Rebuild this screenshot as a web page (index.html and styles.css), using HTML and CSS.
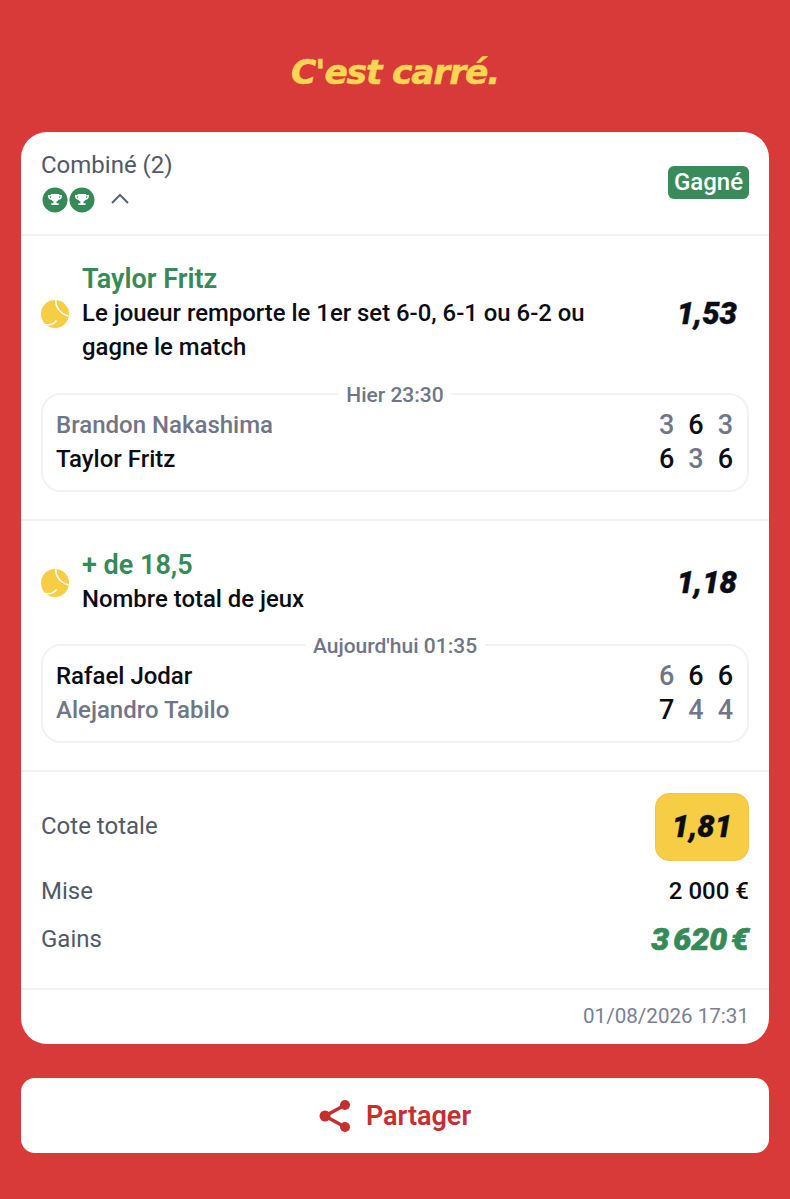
FILE: index.html
```html
<!DOCTYPE html>
<html lang="fr">
<head>
<meta charset="utf-8">
<title>C'est carré</title>
<link rel="stylesheet" href="styles.css">
</head>
<body>
  <div class="logo">C'est carré.</div>

  <div class="ticket">
    <div class="ticket-head">
      <div>
        <div class="bet-type">Combiné (2)</div>
        <div class="trophies">
          <svg class="trophy" viewBox="0 0 26 26"><circle cx="13" cy="13" r="12.500" fill="#358a58"/><path transform="translate(1 1) scale(.92)" d="M8.500 6.500h9v1.200h3v1.600c0 2-1.400 3.400-3.500 3.600-.5 1-1.300 1.600-2.300 1.800v1.800h2.300v1.900H9v-1.900h2.300v-1.800c-1-.2-1.800-.8-2.300-1.800-2.100-.2-3.500-1.600-3.500-3.600V7.700h3zm0 2.600H7.200c0 .9.500 1.500 1.500 1.800zm9 0v1.800c1-.3 1.500-.9 1.500-1.800z" fill="#fff"/></svg>
          <svg class="trophy" viewBox="0 0 26 26"><circle cx="13" cy="13" r="12.500" fill="#358a58"/><path transform="translate(1 1) scale(.92)" d="M8.500 6.500h9v1.200h3v1.600c0 2-1.400 3.400-3.500 3.600-.5 1-1.300 1.600-2.300 1.800v1.800h2.300v1.900H9v-1.900h2.300v-1.800c-1-.2-1.800-.8-2.300-1.800-2.100-.2-3.500-1.600-3.500-3.600V7.700h3zm0 2.600H7.200c0 .9.500 1.500 1.500 1.800zm9 0v1.800c1-.3 1.500-.9 1.500-1.800z" fill="#fff"/></svg>
          <svg class="chevron" viewBox="0 0 20 12"><path d="M2 10l8-8 8 8" fill="none" stroke="#5b6270" stroke-width="2"/></svg>
        </div>
      </div>
      <span class="badge">Gagné</span>
    </div>

    <div class="bet">
      <div class="bet-main">
        <svg class="ball" viewBox="0 0 28 28"><circle cx="14" cy="14" r="14" fill="#f6cd45"/><path d="M15 0c-1 6 3 13 12.500 16M4 24.500c5 1 9-.5 11.500-4" fill="none" stroke="#fff" stroke-width="1.500"/></svg>
        <div class="bet-text">
          <div class="pick">Taylor Fritz</div>
          <div class="market">Le joueur remporte le 1er set 6-0, 6-1 ou 6-2 ou gagne le match</div>
        </div>
        <div class="odds">1,53</div>
      </div>
      <div class="match">
        <span class="match-date">Hier 23:30</span>
        <div class="player lost"><span>Brandon Nakashima</span>
          <div class="sets"><span>3</span><span class="won">6</span><span>3</span></div>
        </div>
        <div class="player"><span>Taylor Fritz</span>
          <div class="sets"><span class="won">6</span><span>3</span><span class="won">6</span></div>
        </div>
      </div>
    </div>

    <div class="bet">
      <div class="bet-main">
        <svg class="ball" viewBox="0 0 28 28"><circle cx="14" cy="14" r="14" fill="#f6cd45"/><path d="M15 0c-1 6 3 13 12.500 16M4 24.500c5 1 9-.5 11.500-4" fill="none" stroke="#fff" stroke-width="1.500"/></svg>
        <div class="bet-text">
          <div class="pick">+ de 18,5</div>
          <div class="market">Nombre total de jeux</div>
        </div>
        <div class="odds">1,18</div>
      </div>
      <div class="match">
        <span class="match-date">Aujourd'hui 01:35</span>
        <div class="player"><span>Rafael Jodar</span>
          <div class="sets"><span>6</span><span class="won">6</span><span class="won">6</span></div>
        </div>
        <div class="player lost"><span>Alejandro Tabilo</span>
          <div class="sets"><span class="won">7</span><span>4</span><span>4</span></div>
        </div>
      </div>
    </div>

    <div class="totals">
      <div class="total-row total-odds">
        <span class="label">Cote totale</span>
        <span class="odds-box">1,81</span>
      </div>
      <div class="total-row stake">
        <span class="label">Mise</span>
        <span class="stake-value">2 000 €</span>
      </div>
      <div class="total-row gains">
        <span class="label">Gains</span>
        <span class="gains-value">3 620 €</span>
      </div>
    </div>

    <div class="ticket-foot">01/08/2026 17:31</div>
  </div>

  <div class="share">
    <svg class="share-icon" viewBox="1 0 33 32">
      <path d="M7 16L27 5M7 16l20 11" fill="none" stroke="#c42f2f" stroke-width="3.500"/>
      <circle cx="7" cy="16" r="5.500" fill="#c42f2f"/>
      <circle cx="27" cy="5" r="5" fill="#c42f2f"/>
      <circle cx="27" cy="27" r="5" fill="#c42f2f"/>
    </svg>
    Partager
  </div>
</body>
</html>
```

FILE: styles.css
```css
body {
  margin: 0;
  padding: 0 21px;
  background-color: #d83a3a;
  font-family: Roboto, "Liberation Sans", sans-serif;
  color: #0b0d14;
}
.logo {
  height: 132px;
  display: flex;
  align-items: center;
  justify-content: center;
  padding-top: 12px;
  box-sizing: border-box;
  font-family: "DejaVu Sans", sans-serif;
  font-size: 34.500px;
  font-weight: 700;
  font-style: italic;
  letter-spacing: -1.200px;
  -webkit-text-stroke: 0.500px #f8d654;
  color: #f8d654;
}
.ticket {
  background-color: #fff;
  border-radius: 26px;
  height: 912px;
}
.ticket-head {
  height: 104px;
  box-sizing: border-box;
  padding: 18px 20px 0;
  display: flex;
  justify-content: space-between;
  align-items: center;
  border-bottom: 2px solid #f1f2f4;
}
.ticket-head > div {
  align-self: flex-start;
}
.bet-type {
  font-size: 24px;
  line-height: 30px;
  color: #525866;
}
.trophies {
  display: flex;
  align-items: center;
  margin-top: 7px;
  padding-left: 1px;
}
.trophy {
  width: 26px;
  height: 26px;
  margin-right: 1px;
}
.chevron {
  width: 20px;
  height: 12px;
  margin: 0 0 2px 14px;
}
.badge {
  background-color: #3b8a5c;
  color: #fff;
  font-size: 24px;
  font-weight: 500;
  line-height: 33px;
  padding: 0 6px;
  border-radius: 6px;
  margin-bottom: 20px;
}
.bet {
  height: 285px;
  box-sizing: border-box;
  padding: 27px 20px 0;
  border-bottom: 2px solid #f1f2f4;
}
.bet + .bet {
  height: 251px;
  padding-top: 28px;
}
.bet-main {
  display: flex;
  align-items: center;
}
.ball {
  width: 28px;
  height: 28px;
  flex-shrink: 0;
  margin-right: 13px;
}
.bet-text {
  flex: 1;
  max-width: 530px;
}
.pick {
  font-size: 27px;
  font-weight: 600;
  line-height: 33px;
  color: #358a58;
}
.market {
  font-size: 23.900px;
  font-weight: 500;
  line-height: 34px;
}
.odds {
  margin-left: auto;
  padding-right: 12px;
  font-size: 31px;
  font-weight: 900;
  font-style: italic;
  -webkit-text-stroke: 0.400px #0b0d14;
}
.match {
  position: relative;
  margin-top: 29px;
  height: 99px;
  box-sizing: border-box;
  padding: 13px 13px 0;
  border: 2px solid #f1f2f4;
  border-radius: 20px;
}
.bet + .bet .match {
  margin-top: 28px;
}
.match-date {
  position: absolute;
  top: -12px;
  left: 50%;
  transform: translateX(-50%);
  padding: 0 8px;
  background-color: #fff;
  font-size: 21px;
  font-weight: 500;
  line-height: 24px;
  white-space: nowrap;
  color: #6f7686;
}
.player {
  display: flex;
  justify-content: space-between;
  align-items: center;
  height: 34px;
  font-size: 24px;
  font-weight: 500;
}
.player.lost > span {
  color: #6f7686;
}
.sets {
  display: flex;
  gap: 14px;
  padding-right: 1px;
  font-size: 27px;
  font-weight: 500;
  color: #6f7686;
}
.sets .won {
  color: #0b0d14;
}
.totals {
  height: 218px;
  box-sizing: border-box;
  padding: 21px 20px 0;
  border-bottom: 2px solid #f1f2f4;
}
.total-row {
  display: flex;
  justify-content: space-between;
  align-items: center;
}
.label {
  font-size: 24px;
  color: #525866;
}
.total-odds .label {
  padding-bottom: 2px;
}
.odds-box {
  width: 94px;
  height: 68px;
  box-sizing: border-box;
  line-height: 66px;
  text-align: center;
  background-color: #f6cd45;
  border: 1px solid #efc64e;
  border-radius: 14px;
  font-size: 31px;
  font-weight: 900;
  font-style: italic;
  -webkit-text-stroke: 0.400px #0b0d14;
}
.stake {
  margin-top: 13px;
  height: 34px;
}
.stake-value {
  font-size: 24px;
  font-weight: 500;
}
.gains {
  margin-top: 14px;
  height: 34px;
}
.gains-value {
  font-size: 32px;
  font-weight: 900;
  font-style: italic;
  word-spacing: -4px;
  -webkit-text-stroke: 0.700px #358a58;
  color: #358a58;
}
.ticket-foot {
  padding: 14px 20px 0;
  text-align: right;
  font-size: 20.600px;
  color: #7a8090;
}
.share {
  margin-top: 34px;
  height: 75px;
  background-color: #fff;
  border-radius: 14px;
  display: flex;
  align-items: center;
  justify-content: center;
  gap: 14px;
  font-size: 27px;
  font-weight: 600;
  color: #c42f2f;
}
.share-icon {
  width: 33px;
  height: 32px;
}
```
